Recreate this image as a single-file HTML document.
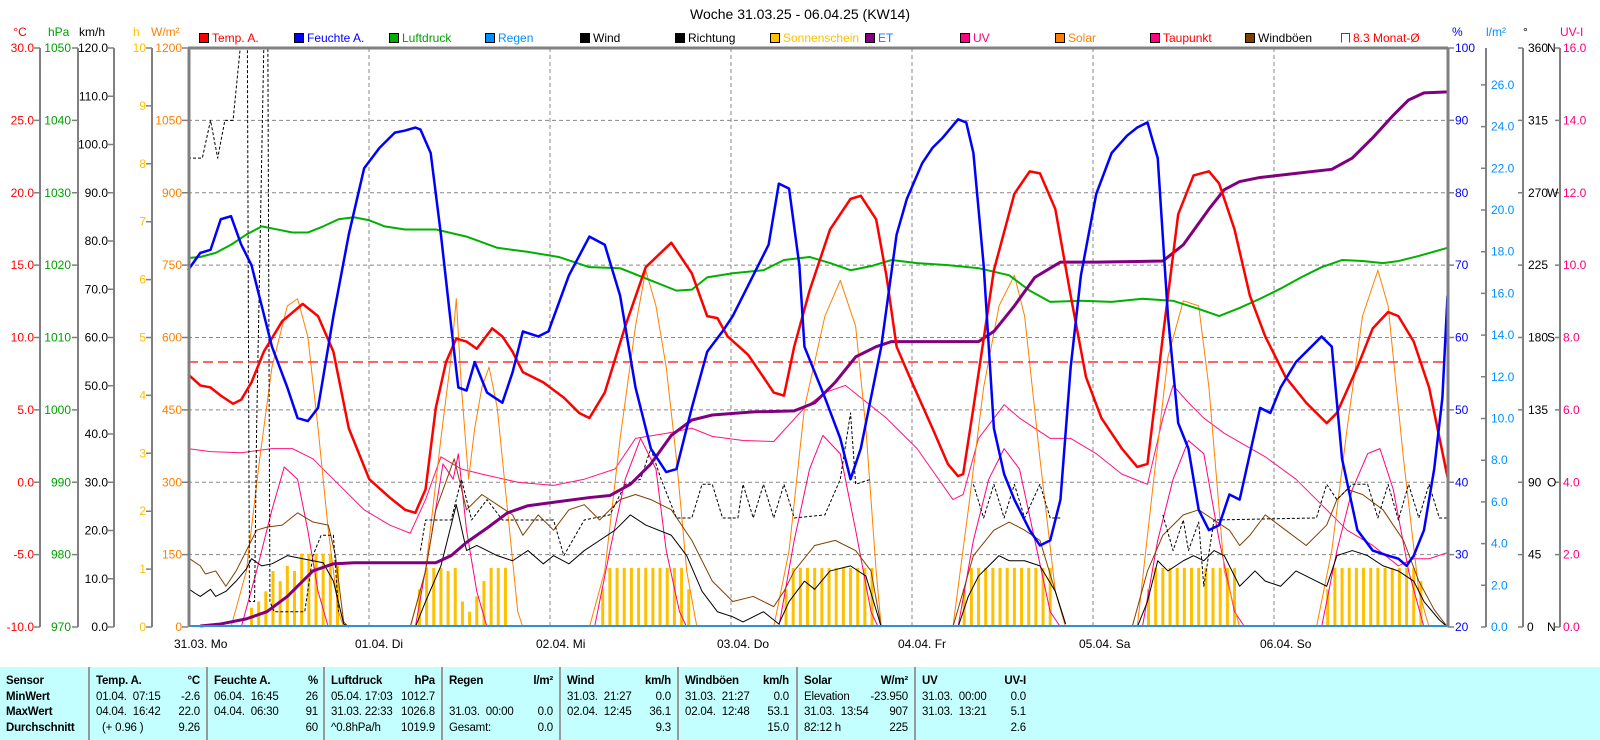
<!DOCTYPE html>
<html><head><meta charset="utf-8"><style>
html,body{margin:0;padding:0;background:#fff;}
body{width:1600px;height:740px;overflow:hidden;position:relative;font-family:"Liberation Sans",sans-serif;}
svg text{font-family:"Liberation Sans",sans-serif;font-size:12px;}
.tbl{position:absolute;left:0;top:667px;width:1600px;height:73px;background:#c3ffff;}
.col{position:absolute;top:0;height:73px;border-left:2px solid #999;width:116px;font-size:11.5px;letter-spacing:-0.2px;}
.r{position:absolute;left:6px;right:6px;height:15px;line-height:15px;white-space:pre;}
.r b{font-weight:bold}
.r span{position:absolute;right:0;top:0}
</style></head><body>
<svg width="1600" height="667" viewBox="0 0 1600 667" xmlns="http://www.w3.org/2000/svg" style="position:absolute;left:0;top:0">
<text x="800" y="19" text-anchor="middle" style="font-size:14px">Woche 31.03.25 - 06.04.25 (KW14)</text>
<g style="font-size:12px">
<rect x="199.5" y="33.5" width="9" height="9" fill="#f00" stroke="#000"/><text x="212" y="42" fill="#f00">Temp. A.</text>
<rect x="294.5" y="33.5" width="9" height="9" fill="#00f" stroke="#000"/><text x="307" y="42" fill="#00f">Feuchte A.</text>
<rect x="389.5" y="33.5" width="9" height="9" fill="#00b000" stroke="#000"/><text x="402" y="42" fill="#00a000">Luftdruck</text>
<rect x="485.5" y="33.5" width="9" height="9" fill="#0090ff" stroke="#000"/><text x="498" y="42" fill="#0090ff">Regen</text>
<rect x="580.5" y="33.5" width="9" height="9" fill="#000" stroke="#000"/><text x="593" y="42" fill="#000">Wind</text>
<rect x="675.5" y="33.5" width="9" height="9" fill="#000" stroke="#000"/><text x="688" y="42" fill="#000">Richtung</text>
<rect x="770.5" y="33.5" width="9" height="9" fill="#ffc000" stroke="#000"/><text x="783" y="42" fill="#ffc000">Sonnenschein</text>
<rect x="865.5" y="33.5" width="9" height="9" fill="#800080" stroke="#000"/><text x="878" y="42" fill="#0080ff">ET</text>
<rect x="960.5" y="33.5" width="9" height="9" fill="#ff0080" stroke="#000"/><text x="973" y="42" fill="#ff0080">UV</text>
<rect x="1055.5" y="33.5" width="9" height="9" fill="#ff8000" stroke="#000"/><text x="1068" y="42" fill="#ff8000">Solar</text>
<rect x="1150.5" y="33.5" width="9" height="9" fill="#ff0080" stroke="#000"/><text x="1163" y="42" fill="#f00">Taupunkt</text>
<rect x="1245.5" y="33.5" width="9" height="9" fill="#804000" stroke="#000"/><text x="1258" y="42" fill="#000">Windböen</text>
<path d="M1341.5 42.5V33.5H1349.5V42.5" fill="none" stroke="#f00"/><text x="1353" y="42" fill="#f00">8.3 Monat-Ø</text>
</g>
<text x="20" y="36" text-anchor="middle" fill="#f00">°C</text>
<text x="48" y="36" fill="#00a000">hPa</text>
<text x="79" y="36" fill="#000">km/h</text>
<text x="133" y="36" fill="#ffc000">h</text>
<text x="151" y="36" fill="#ff8000">W/m²</text>
<text x="1452" y="36" fill="#00f">%</text>
<text x="1486" y="36" fill="#0090ff">l/m²</text>
<text x="1523" y="36" fill="#000">°</text>
<text x="1560" y="36" fill="#ff0080">UV-I</text>
<g stroke="#808080" stroke-width="2" fill="none">
<path d="M40 48V627M78 48V627M114 48V627M152 48V627M1486 48V627M1523 48V627M1560 48V627"/>
</g>
<g stroke="#808080" stroke-width="1.5" fill="none">
<path d="M34 48h6M34 120.4h6M34 192.8h6M34 265.1h6M34 337.5h6M34 409.9h6M34 482.3h6M34 554.6h6M34 627h6"/>
<path d="M72 48h6M72 120.4h6M72 192.8h6M72 265.1h6M72 337.5h6M72 409.9h6M72 482.3h6M72 554.6h6M72 627h6"/>
<path d="M108 48h6M108 96.3h6M108 144.5h6M108 192.8h6M108 241h6M108 289.3h6M108 337.5h6M108 385.8h6M108 434h6M108 482.3h6M108 530.5h6M108 578.8h6M108 627h6"/>
<path d="M146 48h6M146 105.9h6M146 163.8h6M146 221.7h6M146 279.6h6M146 337.5h6M146 395.4h6M146 453.3h6M146 511.2h6M146 569.1h6M146 627h6"/>
<path d="M182 48h6M182 120.4h6M182 192.8h6M182 265.1h6M182 337.5h6M182 409.9h6M182 482.3h6M182 554.6h6M182 627h6"/>
<path d="M1448 48h6M1448 120.4h6M1448 192.8h6M1448 265.1h6M1448 337.5h6M1448 409.9h6M1448 482.3h6M1448 554.6h6M1448 627h6"/>
<path d="M1486 84.9h-5M1486 126.6h-5M1486 168.3h-5M1486 210h-5M1486 251.7h-5M1486 293.4h-5M1486 335.1h-5M1486 376.8h-5M1486 418.5h-5M1486 460.2h-5M1486 501.9h-5M1486 543.6h-5M1486 585.3h-5M1486 627h-5"/>
<path d="M1523 48h-5M1523 120.4h-5M1523 192.8h-5M1523 265.1h-5M1523 337.5h-5M1523 409.9h-5M1523 482.3h-5M1523 554.6h-5M1523 627h-5"/>
<path d="M1560 48h-5M1560 120.4h-5M1560 192.8h-5M1560 265.1h-5M1560 337.5h-5M1560 409.9h-5M1560 482.3h-5M1560 554.6h-5M1560 627h-5"/>
</g>
<g text-anchor="end" fill="#f00">
<text x="34" y="52">30.0</text><text x="34" y="124.4">25.0</text><text x="34" y="196.8">20.0</text><text x="34" y="269.1">15.0</text><text x="34" y="341.5">10.0</text><text x="34" y="413.9">5.0</text><text x="34" y="486.3">0.0</text><text x="34" y="558.6">-5.0</text><text x="34" y="631">-10.0</text>
</g>
<g text-anchor="end" fill="#00a000">
<text x="71" y="52">1050</text><text x="71" y="124.4">1040</text><text x="71" y="196.8">1030</text><text x="71" y="269.1">1020</text><text x="71" y="341.5">1010</text><text x="71" y="413.9">1000</text><text x="71" y="486.3">990</text><text x="71" y="558.6">980</text><text x="71" y="631">970</text>
</g>
<g text-anchor="end" fill="#000">
<text x="108" y="52">120.0</text><text x="108" y="100.3">110.0</text><text x="108" y="148.5">100.0</text><text x="108" y="196.8">90.0</text><text x="108" y="245">80.0</text><text x="108" y="293.3">70.0</text><text x="108" y="341.5">60.0</text><text x="108" y="389.8">50.0</text><text x="108" y="438">40.0</text><text x="108" y="486.3">30.0</text><text x="108" y="534.5">20.0</text><text x="108" y="582.8">10.0</text><text x="108" y="631">0.0</text>
</g>
<g text-anchor="end" fill="#ffc000">
<text x="146" y="52">10</text><text x="146" y="109.9">9</text><text x="146" y="167.8">8</text><text x="146" y="225.7">7</text><text x="146" y="283.6">6</text><text x="146" y="341.5">5</text><text x="146" y="399.4">4</text><text x="146" y="457.3">3</text><text x="146" y="515.2">2</text><text x="146" y="573.1">1</text><text x="146" y="631">0</text>
</g>
<g text-anchor="end" fill="#ff8000">
<text x="182" y="52">1200</text><text x="182" y="124.4">1050</text><text x="182" y="196.8">900</text><text x="182" y="269.1">750</text><text x="182" y="341.5">600</text><text x="182" y="413.9">450</text><text x="182" y="486.3">300</text><text x="182" y="558.6">150</text><text x="182" y="631">0</text>
</g>
<g fill="#00f">
<text x="1455" y="52">100</text><text x="1455" y="124.4">90</text><text x="1455" y="196.8">80</text><text x="1455" y="269.1">70</text><text x="1455" y="341.5">60</text><text x="1455" y="413.9">50</text><text x="1455" y="486.3">40</text><text x="1455" y="558.6">30</text><text x="1455" y="631">20</text>
</g>
<g fill="#0090ff">
<text x="1491" y="88.9">26.0</text><text x="1491" y="130.6">24.0</text><text x="1491" y="172.3">22.0</text><text x="1491" y="214">20.0</text><text x="1491" y="255.7">18.0</text><text x="1491" y="297.4">16.0</text><text x="1491" y="339.1">14.0</text><text x="1491" y="380.8">12.0</text><text x="1491" y="422.5">10.0</text><text x="1491" y="464.2">8.0</text><text x="1491" y="505.9">6.0</text><text x="1491" y="547.6">4.0</text><text x="1491" y="589.3">2.0</text><text x="1491" y="631">0.0</text>
</g>
<g fill="#000">
<text x="1528" y="52">360</text><text x="1528" y="124.4">315</text><text x="1528" y="196.8">270</text><text x="1528" y="269.1">225</text><text x="1528" y="341.5">180</text><text x="1528" y="413.9">135</text><text x="1528" y="486.3">90</text><text x="1528" y="558.6">45</text><text x="1527" y="631">0</text>
<text x="1547" y="52">N</text><text x="1547" y="196.8">W</text><text x="1547" y="341.5">S</text><text x="1547" y="486.3">O</text><text x="1547" y="631">N</text>
</g>
<g fill="#ff0080">
<text x="1563" y="52">16.0</text><text x="1563" y="124.4">14.0</text><text x="1563" y="196.8">12.0</text><text x="1563" y="269.1">10.0</text><text x="1563" y="341.5">8.0</text><text x="1563" y="413.9">6.0</text><text x="1563" y="486.3">4.0</text><text x="1563" y="558.6">2.0</text><text x="1563" y="631">0.0</text>
</g>
<g fill="#000">
<text x="174" y="648">31.03.  Mo</text><text x="355" y="648">01.04.  Di</text><text x="536" y="648">02.04.  Mi</text><text x="717" y="648">03.04.  Do</text><text x="898" y="648">04.04.  Fr</text><text x="1079" y="648">05.04.  Sa</text><text x="1260" y="648">06.04.  So</text>
</g>
<g stroke="#888" stroke-width="1" stroke-dasharray="4,3" fill="none">
<path d="M188 120.4H1448M188 192.8H1448M188 265.1H1448M188 337.5H1448M188 409.9H1448M188 482.3H1448M188 554.6H1448"/>
<path d="M369 48V627M550 48V627M731 48V627M912 48V627M1093 48V627M1274 48V627"/>
</g>
<g transform="matrix(1.024,0,0,1.0194,-4.512,0.088)" fill="none" stroke-linejoin="round">
<g stroke="#ffc000" stroke-width="3">
<path vector-effect="non-scaling-stroke" d="M250 615V596M257 615V590M264 615V580M271 615V560M278 615V570M285 615V555M292 615V560M299 615V543M306 615V543M313 615V543M320 615V543M327 615V543M334 615V555
M414 615V578M421 615V557M428 615V557M435 615V557M442 615V560M449 615V557M456 615V590M463 615V600M470 615V585M477 615V570M484 615V557M491 615V557M498 615V557
M593 615V578M600 615V557M607 615V557M614 615V557M621 615V557M628 615V557M635 615V557M642 615V557M649 615V557M656 615V557M663 615V557M670 615V557M677 615V578
M772 615V578M779 615V557M786 615V557M793 615V557M800 615V557M807 615V557M814 615V557M821 615V557M828 615V557M835 615V557M842 615V557M849 615V557M856 615V557
M946 615V578M953 615V557M960 615V557M967 615V557M974 615V557M981 615V557M988 615V557M995 615V557M1002 615V557M1009 615V557M1016 615V557M1023 615V557M1030 615V557
M1126 615V578M1133 615V557M1140 615V557M1147 615V557M1154 615V557M1161 615V557M1168 615V557M1175 615V557M1182 615V557M1189 615V557M1196 615V557M1203 615V557M1210 615V557
M1301 615V578M1308 615V557M1315 615V557M1322 615V557M1329 615V557M1336 615V557M1343 615V557M1350 615V557M1357 615V557M1364 615V557M1371 615V557M1378 615V557M1385 615V557M1392 615V570"/>
</g>
<polyline vector-effect="non-scaling-stroke" stroke="#ff1480" stroke-width="1" points="188,440 210,443 240,444 270,440 290,440 310,450 330,470 360,500 385,515 405,523 420,490 435,448 455,460 475,465 510,473 545,476 575,470 605,460 625,430 655,425 680,420 700,428 730,432 760,433 790,400 810,385 830,378 845,390 870,410 900,440 935,490 945,485 960,430 985,397 1000,410 1030,430 1050,430 1075,445 1100,465 1125,475 1140,410 1150,378 1165,395 1180,410 1200,425 1240,448 1270,470 1295,495 1320,520 1345,535 1370,555 1385,548 1400,548 1418,542"/>
<path vector-effect="non-scaling-stroke" stroke="#ff0080" stroke-width="1" d="M240 615L255 560L270 500L282 458L295 470L305 520L315 580L325 615M410 615L425 530L437 455L447 470L452 445L460 520L470 580L480 615M585 615L600 540L615 470L630 430L645 460L655 540L668 600L675 615M765 615L780 530L795 460L808 427L825 445L840 520L855 600L862 615M940 615L955 530L970 470L985 440L1000 460L1015 530L1030 600L1040 615M1120 615L1135 530L1150 470L1165 432L1180 445L1195 530L1210 600L1220 615M1295 615L1310 540L1325 480L1340 445L1352 440L1365 480L1380 560L1395 615"/>
<path vector-effect="non-scaling-stroke" stroke="#ff8000" stroke-width="1" d="M230 615L245 560L258 450L270 360L285 300L295 293L305 330L315 420L325 520L335 600L340 615M405 615L420 560L435 430L445 350L450 293L455 380L462 470L468 420L475 380L482 360L490 400L500 500L510 600L515 615M580 615L595 560L610 430L625 320L635 265L645 300L655 360L665 450L675 560L685 615M760 615L775 540L790 400L810 310L825 275L840 320L850 420L860 560L865 615M935 615L950 500L965 380L980 300L995 270L1005 310L1020 450L1035 580L1045 615M1115 615L1130 480L1145 350L1160 295L1175 300L1185 380L1200 560L1215 615M1290 615L1305 540L1320 420L1335 310L1350 265L1360 300L1375 450L1390 580L1400 615"/>
<path vector-effect="non-scaling-stroke" stroke="#804000" stroke-width="1" d="M188 547L200 555L205 563L215 560L225 575L235 560L245 540L255 520L265 517L280 515L295 503L310 512L325 515L332 545L340 610L345 615M405 615L420 560L430 500L448 450L460 500L475 485L490 495L505 505L515 525L530 505L545 520L560 500L575 495L590 510L610 490L625 485L640 490L660 500L680 530L700 570L720 590L740 585L760 595L770 580L780 560L800 535L820 530L840 540L855 560L865 615M935 615L945 580L955 545L975 520L990 512L1005 520L1020 530L1035 580L1045 612M1110 615L1125 560L1140 525L1160 505L1175 500L1190 510L1205 520L1215 535L1225 525L1240 505L1260 520L1280 535L1300 515L1310 490L1320 480L1335 485L1355 500L1375 530L1390 570L1405 598L1418 615"/>
<path vector-effect="non-scaling-stroke" stroke="#000" stroke-width="1" d="M188 577L195 582L200 585L210 578L215 585L225 580L235 570L245 558L250 548L260 555L270 553L285 545L300 548L310 550L320 552L330 570L340 612L345 615M410 615L420 590L435 555L450 495L460 540L470 535L490 545L505 550L520 540L535 553L545 545L560 553L575 540L590 530L605 520L620 505L635 515L660 525L675 545L690 580L705 600L720 605L730 610L750 600L765 612L775 590L790 570L800 578L815 560L835 555L850 565L865 615M940 615L950 585L960 565L970 555L980 545L990 550L1005 550L1020 555L1035 580L1045 612M1115 615L1125 590L1135 550L1145 560L1160 550L1170 545L1180 550L1190 540L1200 545L1215 575L1230 560L1240 570L1255 575L1270 560L1290 570L1300 575L1310 545L1325 540L1340 545L1355 555L1370 560L1385 570L1395 590L1410 608L1418 615"/>
<path vector-effect="non-scaling-stroke" stroke="#000" stroke-width="1" stroke-dasharray="3,2" d="M188 155L202 155L210 118L217 155L224 118L232 118L239 47L246 47L248 590L253 590L255 420L262 47L266 47L268 590L272 600L302 600L310 545L318 525L330 525L335 600M415 540L420 510L445 510L455 470L465 510L480 490L495 510L545 510L555 545L575 510L600 505L615 475L630 470L640 440L650 470L665 508L680 508L690 475L700 475L710 508L725 508L730 475L740 508L750 475L760 508L770 475L780 508L810 505L825 470L835 405L840 475L855 470M955 475L965 508L975 475L985 508L995 475L1005 508L1020 475L1030 508L1040 508M1140 505L1150 540L1160 510L1165 540L1175 512L1180 575L1190 510L1290 508L1300 475L1310 490L1325 475L1340 475L1350 508L1360 475L1370 510L1380 475L1390 508L1400 475L1410 508L1418 508"/>
<polyline vector-effect="non-scaling-stroke" stroke="#00b000" stroke-width="2" points="188,253 200,252 215,248 230,240 245,230 260,222 275,225 290,228 305,228 320,222 335,215 350,213 365,216 380,222 400,225 430,225 460,232 490,243 520,247 550,252 580,262 610,263 640,275 665,285 680,284 695,272 720,268 750,265 770,255 795,252 815,258 835,265 855,261 875,255 900,258 930,260 960,263 990,270 1010,285 1030,296 1060,295 1090,296 1120,293 1150,295 1175,303 1195,310 1215,302 1235,293 1255,283 1275,272 1295,262 1315,255 1335,256 1355,258 1370,256 1390,251 1418,243"/>
<path vector-effect="non-scaling-stroke" stroke="#ff3030" stroke-width="1.5" stroke-dasharray="10,5" d="M188 355H1418"/>
<polyline vector-effect="non-scaling-stroke" stroke="#800080" stroke-width="3" points="200,614 220,612 245,607 265,600 285,585 310,560 330,553 350,552 430,552 445,545 460,532 480,518 500,503 520,496 550,492 580,488 600,486 620,475 640,455 660,427 680,412 700,407 740,404 780,403 800,395 820,375 840,350 860,340 875,335 960,335 975,325 995,300 1015,272 1040,257 1075,257 1140,256 1160,240 1185,205 1200,186 1215,178 1235,174 1270,170 1305,166 1325,155 1345,135 1365,113 1380,98 1395,91 1418,90"/>
<polyline vector-effect="non-scaling-stroke" stroke="#f00" stroke-width="2.5" points="188,367 200,378 210,380 220,388 232,396 240,392 250,375 262,345 280,315 300,298 315,310 330,345 345,420 365,470 385,488 400,500 410,503 420,480 430,400 440,355 450,332 460,335 470,342 485,322 495,330 505,345 515,365 535,375 555,390 570,405 580,410 595,385 615,320 635,262 660,238 680,268 695,310 705,312 715,330 735,348 750,370 760,385 770,388 780,340 795,285 815,225 835,195 845,192 860,215 870,270 880,340 895,375 915,420 930,455 940,467 945,465 955,400 975,265 995,190 1010,168 1020,170 1035,205 1050,290 1065,370 1080,410 1100,440 1115,458 1125,455 1140,330 1155,210 1170,172 1185,168 1195,180 1210,225 1225,290 1240,330 1260,370 1280,395 1300,415 1310,405 1330,360 1345,322 1360,306 1370,310 1385,335 1400,380 1418,468"/>
<polyline vector-effect="non-scaling-stroke" stroke="#00f" stroke-width="2.5" points="188,265 200,248 210,245 220,215 230,212 240,240 250,260 260,300 270,340 285,380 295,410 305,413 315,400 330,310 345,230 360,165 375,145 390,130 400,128 410,125 415,127 425,150 435,230 445,320 452,380 460,383 468,355 480,385 495,395 505,365 515,325 530,330 540,325 560,270 580,232 595,240 610,290 625,380 640,440 655,463 665,460 680,400 695,345 710,325 720,310 740,270 755,240 765,180 775,185 785,260 790,340 810,390 825,430 835,470 845,440 855,390 865,340 880,230 890,195 905,160 915,145 925,135 940,117 948,120 955,150 965,260 975,420 985,465 995,490 1010,520 1020,535 1030,530 1040,490 1050,360 1060,270 1075,190 1090,150 1105,133 1115,125 1125,120 1135,155 1145,310 1155,415 1165,440 1175,500 1185,520 1195,515 1205,485 1215,490 1225,445 1235,400 1245,405 1255,380 1270,355 1285,340 1295,330 1305,340 1315,450 1330,520 1345,540 1360,545 1370,548 1378,555 1385,545 1395,520 1405,460 1413,390 1418,290"/>
</g>
<path d="M188 626H1448" stroke="#3090d0" stroke-width="2"/>
<path d="M189 48V627M188 48H1448M1448 48V627" stroke="#808080" stroke-width="3" fill="none"/>
</svg>
<div class="tbl">
<div class="col" style="left:0;border-left:none;width:88px">
<div class="r" style="top:7px"><b>Sensor</b></div>
<div class="r" style="top:23px"><b>MinWert</b></div>
<div class="r" style="top:38px"><b>MaxWert</b></div>
<div class="r" style="top:54px"><b>Durchschnitt</b></div>
</div>
<div class="col" style="left:88px">
<div class="r" style="top:7px"><b>Temp. A.</b><span><b>°C</b></span></div>
<div class="r" style="top:23px">01.04.  07:15<span>-2.6</span></div>
<div class="r" style="top:38px">04.04.  16:42<span>22.0</span></div>
<div class="r" style="top:54px">  (+ 0.96 )<span>9.26</span></div>
</div>
<div class="col" style="left:206px">
<div class="r" style="top:7px"><b>Feuchte A.</b><span><b>%</b></span></div>
<div class="r" style="top:23px">06.04.  16:45<span>26</span></div>
<div class="r" style="top:38px">04.04.  06:30<span>91</span></div>
<div class="r" style="top:54px"><span>60</span></div>
</div>
<div class="col" style="left:323px">
<div class="r" style="top:7px"><b>Luftdruck</b><span><b>hPa</b></span></div>
<div class="r" style="top:23px">05.04. 17:03<span>1012.7</span></div>
<div class="r" style="top:38px">31.03. 22:33<span>1026.8</span></div>
<div class="r" style="top:54px">^0.8hPa/h<span>1019.9</span></div>
</div>
<div class="col" style="left:441px">
<div class="r" style="top:7px"><b>Regen</b><span><b>l/m²</b></span></div>
<div class="r" style="top:38px">31.03.  00:00<span>0.0</span></div>
<div class="r" style="top:54px">Gesamt:<span>0.0</span></div>
</div>
<div class="col" style="left:559px">
<div class="r" style="top:7px"><b>Wind</b><span><b>km/h</b></span></div>
<div class="r" style="top:23px">31.03.  21:27<span>0.0</span></div>
<div class="r" style="top:38px">02.04.  12:45<span>36.1</span></div>
<div class="r" style="top:54px"><span>9.3</span></div>
</div>
<div class="col" style="left:677px">
<div class="r" style="top:7px"><b>Windböen</b><span><b>km/h</b></span></div>
<div class="r" style="top:23px">31.03.  21:27<span>0.0</span></div>
<div class="r" style="top:38px">02.04.  12:48<span>53.1</span></div>
<div class="r" style="top:54px"><span>15.0</span></div>
</div>
<div class="col" style="left:796px">
<div class="r" style="top:7px"><b>Solar</b><span><b>W/m²</b></span></div>
<div class="r" style="top:23px">Elevation<span>-23.950</span></div>
<div class="r" style="top:38px">31.03.  13:54<span>907</span></div>
<div class="r" style="top:54px">82:12 h<span>225</span></div>
</div>
<div class="col" style="left:914px">
<div class="r" style="top:7px"><b>UV</b><span><b>UV-I</b></span></div>
<div class="r" style="top:23px">31.03.  00:00<span>0.0</span></div>
<div class="r" style="top:38px">31.03.  13:21<span>5.1</span></div>
<div class="r" style="top:54px"><span>2.6</span></div>
</div>
</div>
</body></html>
